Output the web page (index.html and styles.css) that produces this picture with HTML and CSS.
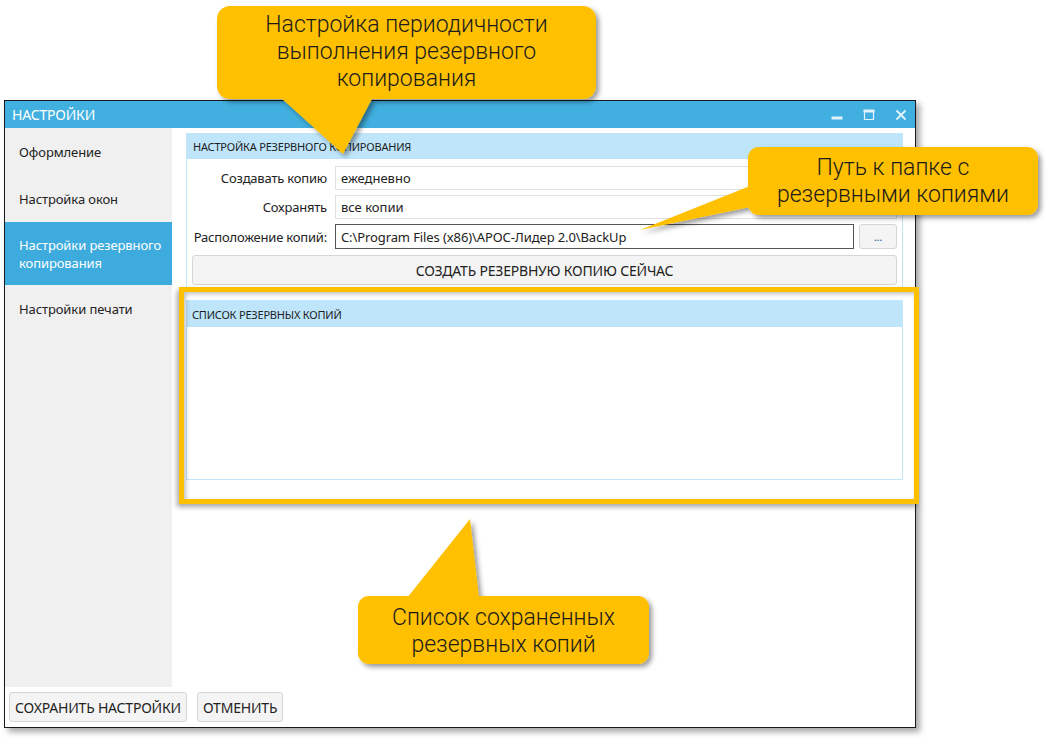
FILE: index.html
```html
<!DOCTYPE html>
<html lang="ru">

<head>
    <meta charset="UTF-8">
    <meta name="viewport" content="width=device-width, initial-scale=1.0">
    <title>НАСТРОЙКИ</title>
    <link rel="stylesheet" href="styles.css">
</head>

<body>
    <div class="stage">
        <div class="window">
            <div class="titlebar">
                <span class="title">НАСТРОЙКИ</span>
                <div class="controls">
                    <svg width="12" height="12" viewBox="0 0 12 12"><rect x="1" y="8" width="10" height="2" /></svg>
                    <svg width="12" height="12" viewBox="0 0 12 12"><path d="M1.5 1.5h9v9h-9z M1.5 2.5h9" fill="none" stroke-width="1.2" /><rect x="1" y="1" width="10" height="2" /></svg>
                    <svg width="12" height="12" viewBox="0 0 12 12"><path d="M1.5 1.5l9 9M10.5 1.5l-9 9" fill="none" stroke-width="1.8" /></svg>
                </div>
            </div>

            <div class="main">
                <ul class="nav">
                    <li>Оформление</li>
                    <li>Настройка окон</li>
                    <li class="active">Настройки резервного копирования</li>
                    <li>Настройки печати</li>
                </ul>

                <div class="content">
                    <section class="group">
                        <div class="group-head">НАСТРОЙКА РЕЗЕРВНОГО КОПИРОВАНИЯ</div>
                        <div class="form">
                            <label>Создавать копию</label>
                            <div class="combo">ежедневно</div>

                            <label>Сохранять</label>
                            <div class="combo">все копии</div>

                            <label>Расположение копий:</label>
                            <div class="path-row">
                                <div class="path">C:\Program Files (x86)\АРОС-Лидер 2.0\BackUp</div>
                                <button class="btn browse">...</button>
                            </div>
                        </div>
                        <button class="btn wide">СОЗДАТЬ РЕЗЕРВНУЮ КОПИЮ СЕЙЧАС</button>
                    </section>

                    <section class="group list">
                        <div class="group-head">СПИСОК РЕЗЕРВНЫХ КОПИЙ</div>
                        <div class="list-body"></div>
                    </section>
                </div>
            </div>

            <div class="footer">
                <button class="btn">СОХРАНИТЬ НАСТРОЙКИ</button>
                <button class="btn">ОТМЕНИТЬ</button>
            </div>
        </div>

        <!-- подсказки поверх окна -->
        <div class="frame"></div>

        <svg class="notes" width="1052" height="739" viewBox="0 0 1052 739">
            <defs>
                <filter id="shade" x="-10%" y="-10%" width="130%" height="140%">
                    <feDropShadow dx="3" dy="3" stdDeviation="2.5" flood-color="#000" flood-opacity="0.4" />
                </filter>
            </defs>
            <g filter="url(#shade)">
                <rect x="217" y="6" width="379" height="93" rx="13" />
                <polygon points="280,97 373,97 343,154" />

                <rect x="748" y="147" width="290" height="68" rx="11" />
                <polygon points="750,186 750,207 640,230" />

                <rect x="358" y="596" width="291" height="68" rx="11" />
                <polygon points="407,598 479,598 470,519" />
            </g>
        </svg>

        <div class="callout c1">Настройка периодичности<br>выполнения резервного<br>копирования</div>
        <div class="callout c2">Путь к папке с<br>резервными копиями</div>
        <div class="callout c3">Список сохраненных<br>резервных копий</div>
    </div>
</body>

</html>
```

FILE: styles.css
```css
body {
    margin: 0;
    background: #fff;
    font-family: "Noto Sans", "Open Sans", sans-serif;
    color: #222;
}

.stage {
    position: relative;
    width: 1052px;
    height: 739px;
    padding: 100px 0 0 4px;
    box-sizing: border-box;
    overflow: hidden;
}

.window {
    width: 912px;
    height: 628px;
    box-sizing: border-box;
    border: 1px solid #1a1a1a;
    background: #fff;
    display: flex;
    flex-direction: column;
    box-shadow: 4px 4px 6px rgba(0, 0, 0, 0.35);
}

.titlebar {
    height: 27px;
    background: #41afe0;
    display: flex;
    align-items: center;
    justify-content: space-between;
    padding: 0 0 0 7px;
    flex-shrink: 0;
}

.title {
    color: #fff;
    font-size: 14px;
    letter-spacing: -0.2px;
}

.controls {
    display: flex;
    gap: 20px;
    padding-right: 8px;
}

.controls svg {
    fill: #e3f3fb;
    stroke: #e3f3fb;
}

.main {
    flex: 1;
    display: flex;
    min-height: 0;
}

.nav {
    list-style: none;
    margin: 0;
    padding: 0;
    width: 167px;
    background: #f0f0f0;
    flex-shrink: 0;
}

.nav li {
    height: 47px;
    display: flex;
    align-items: center;
    padding: 0 10px 0 14px;
    font-size: 13px;
    line-height: 18px;
    letter-spacing: -0.1px;
}

.nav li.active {
    height: 63px;
    background: #3eabde;
    color: #fff;
}

.content {
    flex: 1;
    padding: 5px 12px 0 14px;
}

.group {
    border: 1px solid #c4e6f9;
    border-top: none;
    padding: 0 5px 3px 5px;
}

.group-head {
    height: 26px;
    margin: 0 -5px;
    padding-left: 6px;
    background: #bee5fa;
    display: flex;
    align-items: center;
    font-size: 11px;
    letter-spacing: -0.2px;
    color: #1e1e1e;
}

.form {
    display: grid;
    grid-template-columns: 137px 1fr;
    grid-template-rows: 24px 24px 25px;
    column-gap: 6px;
    row-gap: 5px;
    margin-top: 7px;
    font-size: 13px;
}

.form label {
    display: flex;
    align-items: center;
    justify-content: flex-end;
    padding-right: 2px;
    white-space: nowrap;
    letter-spacing: -0.2px;
}

.combo {
    border: 1px solid #e0e0e0;
    background: #fff;
    display: flex;
    align-items: center;
    padding-left: 5px;
}

.path-row {
    display: flex;
    gap: 5px;
}

.path {
    flex: 1;
    border: 1px solid #555;
    display: flex;
    align-items: center;
    padding-left: 5px;
    letter-spacing: -0.1px;
}

.btn {
    font-family: inherit;
    font-size: 14px;
    color: #222;
    background: #f4f4f4;
    border: 1px solid #d6d6d6;
    border-radius: 3px;
    padding: 0 5px;
    height: 30px;
    letter-spacing: -0.2px;
}

.browse {
    width: 38px;
    height: 25px;
    font-size: 11px;
    color: #1c5d99;
    padding: 0;
}

.wide {
    display: block;
    width: 100%;
    margin-top: 6px;
}

.list {
    margin-top: 11px;
    border-top: 1px solid #c4e6f9;
    padding: 0;
}

.list .group-head {
    margin: 0;
    padding-left: 5px;
}

.list-body {
    height: 152px;
}

.footer {
    height: 40px;
    flex-shrink: 0;
    display: flex;
    gap: 10px;
    padding: 5px 0 0 4px;
    box-sizing: border-box;
}

/* выноски */
.frame {
    position: absolute;
    left: 179px;
    top: 287px;
    width: 740px;
    height: 217px;
    box-sizing: border-box;
    border: 5px solid #ffc000;
    box-shadow: -2px 3px 5px rgba(0, 0, 0, 0.35), inset 2px 2px 4px rgba(0, 0, 0, 0.25);
}

.notes {
    position: absolute;
    left: 0;
    top: 0;
    fill: #ffc000;
}

.callout {
    position: absolute;
    font-family: Roboto, sans-serif;
    font-weight: 300;
    font-size: 23px;
    line-height: 27px;
    color: #1b1b1b;
    text-align: center;
}

.c1 {
    left: 217px;
    top: 11px;
    width: 379px;
}

.c2 {
    left: 748px;
    top: 154px;
    width: 290px;
}

.c3 {
    left: 358px;
    top: 604px;
    width: 291px;
}
```
